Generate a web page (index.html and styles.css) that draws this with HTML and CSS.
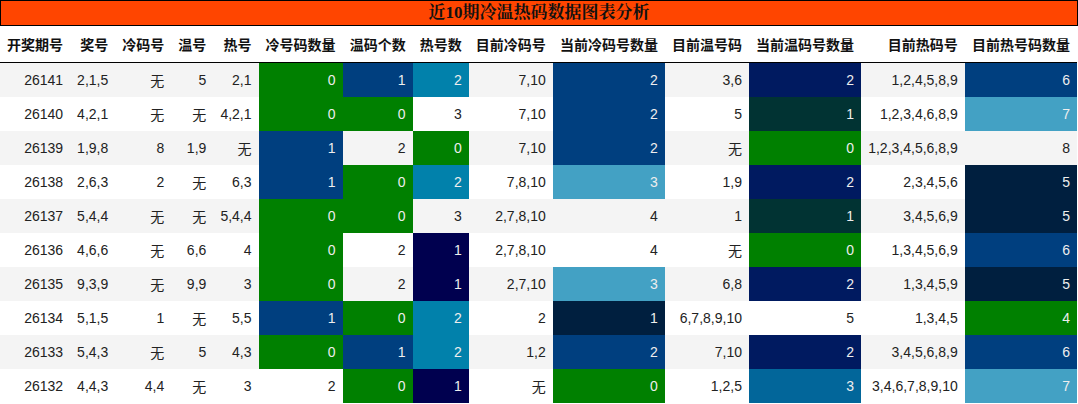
FILE: index.html
```html
<!DOCTYPE html>
<html lang="zh-CN">
<head>
<meta charset="utf-8">
<title>近10期冷温热码数据图表分析</title>
<link rel="stylesheet" href="styles.css">
</head>
<body>
<div class="title">近10期冷温热码数据图表分析</div>
<table class="grid">
  <thead>
    <tr>
      <th>开奖期号</th><th>奖号</th><th>冷码号</th><th>温号</th><th>热号</th><th>冷号码数量</th><th>温码个数</th><th>热号数</th><th>目前冷码号</th><th>当前冷码号数量</th><th>目前温号码</th><th>当前温码号数量</th><th>目前热码号</th><th>目前热号码数量</th>
    </tr>
  </thead>
  <tbody>
    <tr>
      <td>26141</td><td>2,1,5</td><td>无</td><td>5</td><td>2,1</td>
      <td class="c-green">0</td><td class="c-blue">1</td><td class="c-teal">2</td>
      <td>7,10</td><td class="c-blue">2</td><td>3,6</td><td class="c-navy2">2</td><td>1,2,4,5,8,9</td><td class="c-blue">6</td>
    </tr>
    <tr>
      <td>26140</td><td>4,2,1</td><td>无</td><td>无</td><td>4,2,1</td>
      <td class="c-green">0</td><td class="c-green">0</td><td>3</td>
      <td>7,10</td><td class="c-blue">2</td><td>5</td><td class="c-dteal">1</td><td>1,2,3,4,6,8,9</td><td class="c-light">7</td>
    </tr>
    <tr>
      <td>26139</td><td>1,9,8</td><td>8</td><td>1,9</td><td>无</td>
      <td class="c-blue">1</td><td>2</td><td class="c-green">0</td>
      <td>7,10</td><td class="c-blue">2</td><td>无</td><td class="c-green">0</td><td>1,2,3,4,5,6,8,9</td><td>8</td>
    </tr>
    <tr>
      <td>26138</td><td>2,6,3</td><td>2</td><td>无</td><td>6,3</td>
      <td class="c-blue">1</td><td class="c-green">0</td><td class="c-teal">2</td>
      <td>7,8,10</td><td class="c-light">3</td><td>1,9</td><td class="c-navy2">2</td><td>2,3,4,5,6</td><td class="c-dark">5</td>
    </tr>
    <tr>
      <td>26137</td><td>5,4,4</td><td>无</td><td>无</td><td>5,4,4</td>
      <td class="c-green">0</td><td class="c-green">0</td><td>3</td>
      <td>2,7,8,10</td><td>4</td><td>1</td><td class="c-dteal">1</td><td>3,4,5,6,9</td><td class="c-dark">5</td>
    </tr>
    <tr>
      <td>26136</td><td>4,6,6</td><td>无</td><td>6,6</td><td>4</td>
      <td class="c-green">0</td><td>2</td><td class="c-navy">1</td>
      <td>2,7,8,10</td><td>4</td><td>无</td><td class="c-green">0</td><td>1,3,4,5,6,9</td><td class="c-blue">6</td>
    </tr>
    <tr>
      <td>26135</td><td>9,3,9</td><td>无</td><td>9,9</td><td>3</td>
      <td class="c-green">0</td><td>2</td><td class="c-navy">1</td>
      <td>2,7,10</td><td class="c-light">3</td><td>6,8</td><td class="c-navy2">2</td><td>1,3,4,5,9</td><td class="c-dark">5</td>
    </tr>
    <tr>
      <td>26134</td><td>5,1,5</td><td>1</td><td>无</td><td>5,5</td>
      <td class="c-blue">1</td><td class="c-green">0</td><td class="c-teal">2</td>
      <td>2</td><td class="c-dark">1</td><td>6,7,8,9,10</td><td>5</td><td>1,3,4,5</td><td class="c-green">4</td>
    </tr>
    <tr>
      <td>26133</td><td>5,4,3</td><td>无</td><td>5</td><td>4,3</td>
      <td class="c-green">0</td><td class="c-blue">1</td><td class="c-teal">2</td>
      <td>1,2</td><td class="c-blue">2</td><td>7,10</td><td class="c-navy2">2</td><td>3,4,5,6,8,9</td><td class="c-blue">6</td>
    </tr>
    <tr>
      <td>26132</td><td>4,4,3</td><td>4,4</td><td>无</td><td>3</td>
      <td>2</td><td class="c-green">0</td><td class="c-navy">1</td>
      <td>无</td><td class="c-green">0</td><td>1,2,5</td><td class="c-sea">3</td><td>3,4,6,7,8,9,10</td><td class="c-light">7</td>
    </tr>
  </tbody>
</table>
</body>
</html>
```
FILE: styles.css
```css
html, body {
  margin: 0;
  padding: 0;
  background: #fff;
}

body {
  width: 1078px;
  font-family: "Liberation Sans", "Noto Sans CJK SC", sans-serif;
  color: #222;
}

.title {
  box-sizing: border-box;
  height: 26px;
  border: 1px solid #000;
  background: #ff4500;
  color: #111;
  text-align: center;
  font-family: "Liberation Serif", "Noto Serif CJK SC", "Noto Sans CJK SC", serif;
  font-weight: bold;
  font-size: 17px;
  line-height: 24px;
}

.grid {
  width: 1077px;
  border-collapse: collapse;
  border-spacing: 0;
  font-size: 14px;
}

.grid th,
.grid td {
  padding: 0 7px;
  text-align: right;
  white-space: nowrap;
}

.grid th {
  height: 36px;
  font-weight: bold;
  color: #111;
  border-bottom: 1px solid #000;
}

.grid td {
  height: 34px;
}

.grid tbody tr:nth-child(odd) td {
  background: #f4f4f4;
}

.grid tbody tr td.c-green { background: #008000; color: #eee; }
.grid tbody tr td.c-blue { background: #003f7f; color: #eee; }
.grid tbody tr td.c-teal { background: #0181ab; color: #eee; }
.grid tbody tr td.c-navy { background: #00004f; color: #eee; }
.grid tbody tr td.c-navy2 { background: #001a60; color: #eee; }
.grid tbody tr td.c-dteal { background: #013333; color: #eee; }
.grid tbody tr td.c-light { background: #43a1c4; color: #eee; }
.grid tbody tr td.c-dark { background: #001f3f; color: #eee; }
.grid tbody tr td.c-sea { background: #02669a; color: #eee; }
```
